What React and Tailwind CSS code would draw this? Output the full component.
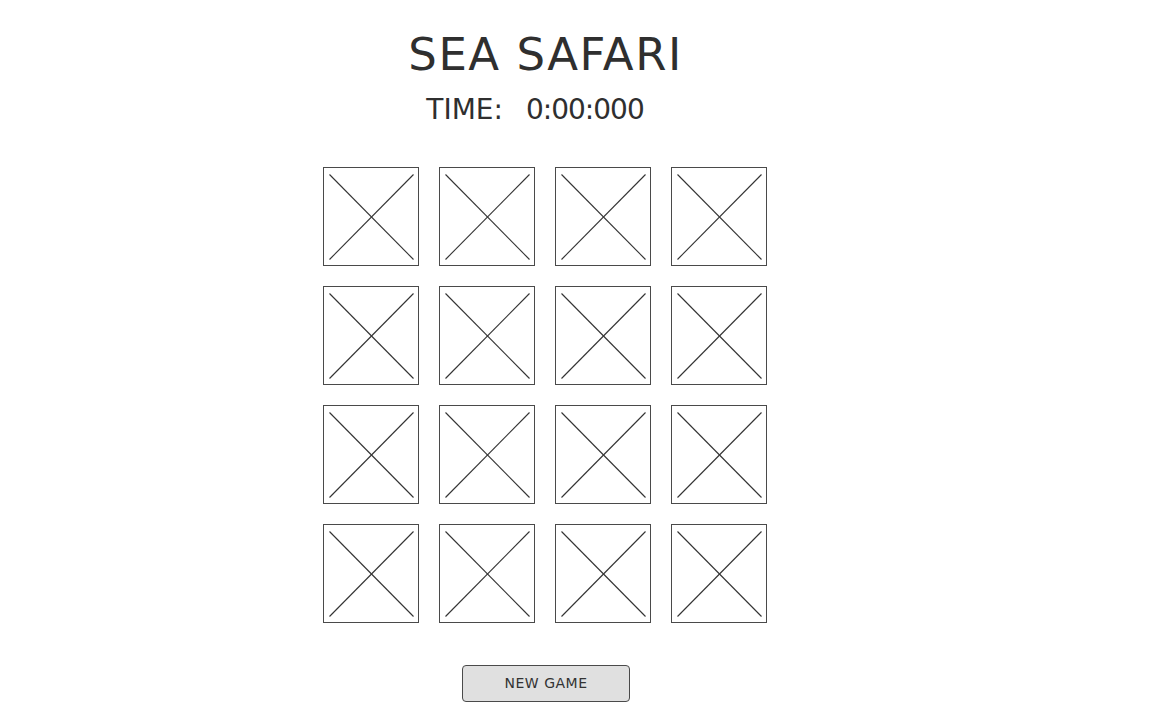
import React from "react";

function Placeholder() {
  return (
    <div className="w-[96px] h-[99px] border border-[#4a4a4a] bg-white">
      <svg width="94" height="97" viewBox="0 0 94 97" className="block">
        <line x1="5.5" y1="6.5" x2="89.5" y2="91.5" stroke="#333" strokeWidth="1.1" />
        <line x1="89.5" y1="6.5" x2="5.5" y2="91.5" stroke="#333" strokeWidth="1.1" />
      </svg>
    </div>
  );
}

export default function App() {
  const cells = Array.from({ length: 16 });
  return (
    <div
      className="w-[1150px] h-[703px] bg-white overflow-hidden text-[#2f2f2f]"
      style={{ fontFamily: '"DejaVu Sans", "Liberation Sans", sans-serif' }}
    >
      <div className="w-[1090px] flex flex-col items-center">
        <h1 className="mt-[29px] ml-[1px] text-[45px] leading-[52px] font-normal tracking-[1.5px]">SEA SAFARI</h1>
        <div className="mt-[11px] mr-[20px] text-[28px] leading-[36px] flex gap-[23px]">
          <span>TIME:</span>
          <span className="tracking-[-1px]">0:00:000</span>
        </div>
        <div className="mt-[39px] grid grid-cols-4 gap-x-[20px] gap-y-[20px]">
          {cells.map((_, i) => (
            <Placeholder key={i} />
          ))}
        </div>
        <button className="mt-[42px] ml-[2px] w-[168px] h-[37px] bg-[#e0e0e0] border border-[#4a4a4a] rounded-[4px] text-[14px] tracking-[0.5px] text-[#333]">
          NEW GAME
        </button>
      </div>
    </div>
  );
}
